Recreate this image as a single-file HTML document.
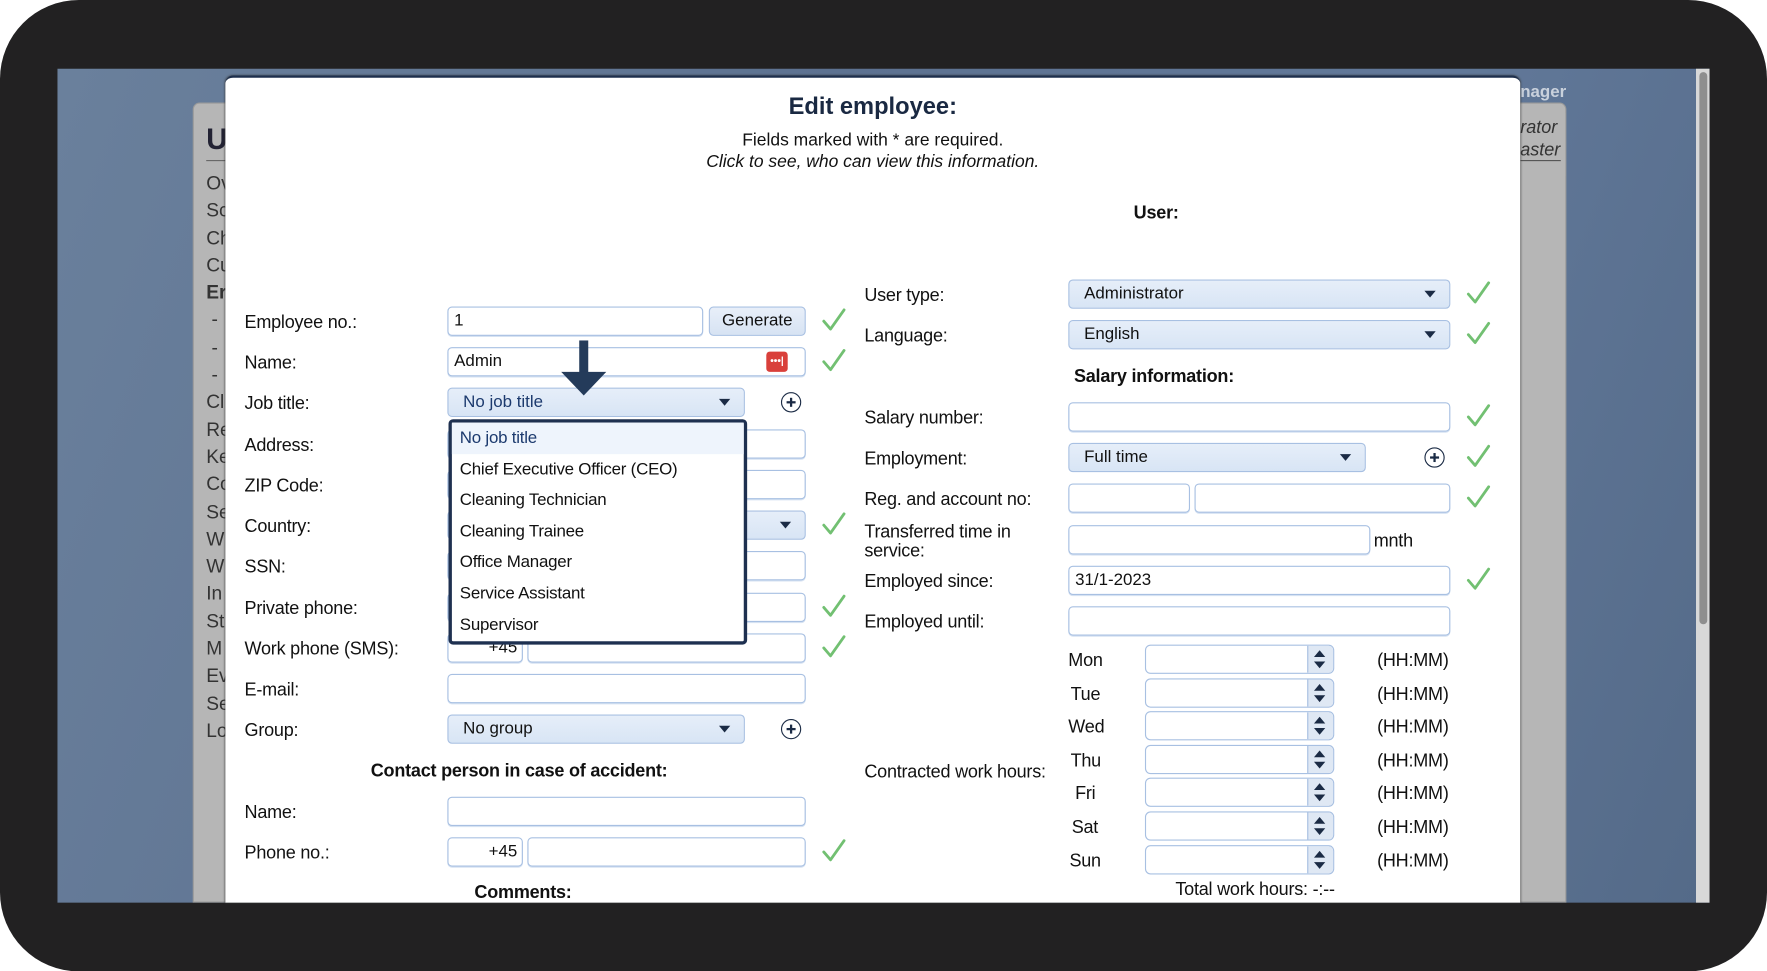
<!DOCTYPE html>
<html><head><meta charset="utf-8"><style>
html,body{margin:0;padding:0;background:#fff;overflow:hidden;width:1767px;height:971px}
#w{position:absolute;left:0;top:0;width:1568px;height:862px;transform:scale(1.12691);transform-origin:0 0;font-family:"Liberation Sans",Arial,sans-serif;color:#111}
.a{position:absolute}
.frame{left:0;top:0;width:1568px;height:862px;background:#222122;border-radius:70px}
.screen{left:51px;top:61px;width:1466px;height:740px;background:linear-gradient(110deg,#6a809c 0%,#5d7291 40%,#62799a 70%,#546a88 100%);overflow:hidden}
.l{position:absolute;font-size:16px;line-height:18px;transform:translateY(-7px);white-space:nowrap;letter-spacing:-0.2px}
.in{position:absolute;height:26px;border:1px solid #a8c0e2;border-radius:4px;background:#fff;box-shadow:0 1px 0 #d6e2f2;transform:translateY(-13px);box-sizing:border-box;font-size:15px;line-height:23px;padding-left:5px}
.sel{position:absolute;height:26px;border:1px solid #a8c0e2;border-radius:4px;background:linear-gradient(#e6eef9,#d8e5f5);transform:translateY(-13px);box-sizing:border-box;font-size:15px;line-height:23px;padding-left:13px}
.sel:after{content:"";position:absolute;right:12px;top:9px;border-left:5px solid transparent;border-right:5px solid transparent;border-top:6px solid #1b2b45}
.ck{position:absolute;transform:translateY(-12px)}
.pl{position:absolute;width:18px;height:18px;border:1.5px solid #1b2b45;border-radius:50%;transform:translateY(-9px);box-sizing:border-box}
.pl:before{content:"";position:absolute;left:3.5px;top:6.5px;width:8px;height:2px;background:#1b2b45}
.pl:after{content:"";position:absolute;left:6.5px;top:3.5px;width:2px;height:8px;background:#1b2b45}
.sp{position:absolute;height:26px;width:168px;border:1px solid #a8c0e2;border-radius:5px;background:#fff;transform:translateY(-13px);box-sizing:border-box;overflow:hidden}
.sp i{position:absolute;right:0;top:0;width:22px;height:100%;background:#dfe8f4;border-left:1px solid #a8c0e2}
.sp i:before{content:"";position:absolute;left:5px;top:4px;border-left:5px solid transparent;border-right:5px solid transparent;border-bottom:6px solid #1b2b45}
.sp i:after{content:"";position:absolute;left:5px;top:14px;border-left:5px solid transparent;border-right:5px solid transparent;border-top:6px solid #1b2b45}
.dd div{height:27.6px;line-height:27px;padding-left:7px;font-size:15px;letter-spacing:-0.2px}
</style></head><body><div id="w">
<div class="a frame"></div>
<div class="a screen"></div>
<div class="a" style="left:1505px;top:61px;width:12px;height:740px;background:#d8d8d8"></div>
<div class="a" style="left:1508px;top:64px;width:7px;height:490px;background:#8e8e8e;border-radius:4px"></div>
<div class="a" style="left:171px;top:91px;width:1219px;height:710px;background:#b6b6b6;border-radius:6px 6px 0 0;border:1px solid #9a9a9a;box-sizing:border-box"></div>
<div class="a" style="left:183px;top:108px;font-size:26px;font-weight:bold;color:#223">U</div>
<div class="a" style="left:183px;top:142px;width:20px;height:1px;background:#666"></div>
<div class="a" style="left:183px;top:151px;font-size:17px;line-height:24.3px;color:#333">Ov<br>Sc<br>Ch<br>Cu<br><b>Er</b><br>&nbsp;-<br>&nbsp;-<br>&nbsp;-<br>Cl<br>Re<br>Ke<br>Co<br>Se<br>W<br>W<br>In<br>St<br>M<br>Ev<br>Se<br>Lo</div>
<div class="a" style="left:1349px;top:73px;font-size:15px;font-weight:bold;color:#c9d1dc">nager</div>
<div class="a" style="left:1349px;top:96px;width:40px;height:60px;background:#b6b6b6;border-radius:0 5px 0 0"></div>
<div class="a" style="left:1349px;top:104px;font-size:16px;font-style:italic;color:#333;line-height:20px">rator<br><span style="border-bottom:1px solid #555">aster</span></div>
<div class="a" style="left:200px;top:67px;width:1149px;height:734px;background:#fff;border-top:2px solid #1d2f4d;border-radius:7px 7px 0 0;box-sizing:border-box;box-shadow:0 0 2px #333"></div>
<div class="a" style="left:200px;top:83px;width:1149px;text-align:center;font-size:21px;font-weight:bold;color:#1a2942">Edit employee:</div>
<div class="a" style="left:200px;top:115px;width:1149px;text-align:center;font-size:15.5px;line-height:19px">Fields marked with * are required.<br><i>Click to see, who can view this information.</i></div>
<div class="l" style="left:1006px;top:188px;font-weight:bold">User:</div>

<div class="l" style="left:217px;top:285px">Employee no.:</div>
<div class="in" style="left:397px;top:285px;width:227px">1</div>
<div class="a" style="left:629px;top:272px;width:86px;height:26px;border:1px solid #a8c0e2;border-radius:4px;background:linear-gradient(#e8eff9,#d7e3f3);box-sizing:border-box;text-align:center;font-size:15px;line-height:24px">Generate</div>
<div class="l" style="left:217px;top:321px">Name:</div>
<div class="in" style="left:397px;top:321px;width:318px">Admin</div>
<div class="a" style="left:680px;top:312px;width:19px;height:18px;background:#d9403b;border-radius:3px;color:#fff;font-size:9px;line-height:17px;text-align:center;font-weight:bold">•••|</div>
<div class="l" style="left:217px;top:357px">Job title:</div>
<div class="sel" style="left:397px;top:357px;width:264px;color:#1c3a6e">No job title</div>
<div class="pl" style="left:693px;top:357px"></div>
<div class="l" style="left:217px;top:394px">Address:</div>
<div class="in" style="left:397px;top:394px;width:318px"></div>
<div class="l" style="left:217px;top:430px">ZIP Code:</div>
<div class="in" style="left:397px;top:430px;width:318px"></div>
<div class="l" style="left:217px;top:466px">Country:</div>
<div class="sel" style="left:397px;top:466px;width:318px"></div>
<div class="l" style="left:217px;top:502px">SSN:</div>
<div class="in" style="left:397px;top:502px;width:318px"></div>
<div class="l" style="left:217px;top:539px">Private phone:</div>
<div class="in" style="left:397px;top:539px;width:318px"></div>
<div class="l" style="left:217px;top:575px">Work phone (SMS):</div>
<div class="in" style="left:397px;top:575px;width:67px;text-align:right;padding-right:4px">+45</div>
<div class="in" style="left:468px;top:575px;width:247px"></div>
<div class="l" style="left:217px;top:611px">E-mail:</div>
<div class="in" style="left:397px;top:611px;width:318px"></div>
<div class="l" style="left:217px;top:647px">Group:</div>
<div class="sel" style="left:397px;top:647px;width:264px">No group</div>
<div class="pl" style="left:693px;top:647px"></div>
<div class="l" style="left:329px;top:683px;font-weight:bold">Contact person in case of accident:</div>
<div class="l" style="left:217px;top:720px">Name:</div>
<div class="in" style="left:397px;top:720px;width:318px"></div>
<div class="l" style="left:217px;top:756px">Phone no.:</div>
<div class="in" style="left:397px;top:756px;width:67px;text-align:right;padding-right:4px">+45</div>
<div class="in" style="left:468px;top:756px;width:247px"></div>
<div class="l" style="left:421px;top:791px;font-weight:bold">Comments:</div>

<div class="a dd" style="left:398px;top:372px;width:265px;height:200px;border:3px solid #1e3050;border-radius:4px;background:#fff;box-sizing:border-box">
<div style="background:#eef4fc;color:#1c3a6e">No job title</div>
<div>Chief Executive Officer (CEO)</div>
<div>Cleaning Technician</div>
<div>Cleaning Trainee</div>
<div>Office Manager</div>
<div>Service Assistant</div>
<div>Supervisor</div>
</div>
<svg class="a" style="left:496px;top:302px" width="44" height="50"><rect x="18" y="0" width="8" height="30" fill="#243b5a"/><path d="M2 28 L42 28 L22 49 Z" fill="#243b5a"/></svg>

<div class="l" style="left:767px;top:261px">User type:</div>
<div class="sel" style="left:948px;top:261px;width:339px">Administrator</div>
<div class="l" style="left:767px;top:297px">Language:</div>
<div class="sel" style="left:948px;top:297px;width:339px">English</div>
<div class="l" style="left:953px;top:333px;font-weight:bold">Salary information:</div>
<div class="l" style="left:767px;top:370px">Salary number:</div>
<div class="in" style="left:948px;top:370px;width:339px"></div>
<div class="l" style="left:767px;top:406px">Employment:</div>
<div class="sel" style="left:948px;top:406px;width:264px">Full time</div>
<div class="pl" style="left:1264px;top:406px"></div>
<div class="l" style="left:767px;top:442px">Reg. and account no:</div>
<div class="in" style="left:948px;top:442px;width:108px"></div>
<div class="in" style="left:1060px;top:442px;width:227px"></div>
<div class="l" style="left:767px;top:479px;line-height:17px;transform:translateY(-15px)">Transferred time in<br>service:</div>
<div class="in" style="left:948px;top:479px;width:268px"></div>
<div class="l" style="left:1219px;top:479px">mnth</div>
<div class="l" style="left:767px;top:515px">Employed since:</div>
<div class="in" style="left:948px;top:515px;width:339px">31/1-2023</div>
<div class="l" style="left:767px;top:551px">Employed until:</div>
<div class="in" style="left:948px;top:551px;width:339px"></div>
<div class="l" style="left:767px;top:684px">Contracted work hours:</div>

<div class="l" style="left:948px;top:585px">Mon</div><div class="sp" style="left:1016px;top:585px"><i></i></div><div class="l" style="left:1222px;top:585px">(HH:MM)</div>
<div class="l" style="left:950px;top:615px">Tue</div><div class="sp" style="left:1016px;top:615px"><i></i></div><div class="l" style="left:1222px;top:615px">(HH:MM)</div>
<div class="l" style="left:948px;top:644px">Wed</div><div class="sp" style="left:1016px;top:644px"><i></i></div><div class="l" style="left:1222px;top:644px">(HH:MM)</div>
<div class="l" style="left:950px;top:674px">Thu</div><div class="sp" style="left:1016px;top:674px"><i></i></div><div class="l" style="left:1222px;top:674px">(HH:MM)</div>
<div class="l" style="left:954px;top:703px">Fri</div><div class="sp" style="left:1016px;top:703px"><i></i></div><div class="l" style="left:1222px;top:703px">(HH:MM)</div>
<div class="l" style="left:951px;top:733px">Sat</div><div class="sp" style="left:1016px;top:733px"><i></i></div><div class="l" style="left:1222px;top:733px">(HH:MM)</div>
<div class="l" style="left:949px;top:763px">Sun</div><div class="sp" style="left:1016px;top:763px"><i></i></div><div class="l" style="left:1222px;top:763px">(HH:MM)</div>
<div class="l" style="left:1043px;top:788px">Total work hours: -:--</div>

<svg width="0" height="0" style="position:absolute"><defs><symbol id="c" viewBox="0 0 22 22"><path d="M2 12 L8 19 L20 2" fill="none" stroke="#72c072" stroke-width="2.5" stroke-linecap="round" stroke-linejoin="round"/></symbol></defs></svg>
<svg class="ck" style="left:729px;top:285px" width="22" height="22"><use href="#c"/></svg>
<svg class="ck" style="left:729px;top:321px" width="22" height="22"><use href="#c"/></svg>
<svg class="ck" style="left:729px;top:466px" width="22" height="22"><use href="#c"/></svg>
<svg class="ck" style="left:729px;top:539px" width="22" height="22"><use href="#c"/></svg>
<svg class="ck" style="left:729px;top:575px" width="22" height="22"><use href="#c"/></svg>
<svg class="ck" style="left:729px;top:756px" width="22" height="22"><use href="#c"/></svg>
<svg class="ck" style="left:1301px;top:261px" width="22" height="22"><use href="#c"/></svg>
<svg class="ck" style="left:1301px;top:297px" width="22" height="22"><use href="#c"/></svg>
<svg class="ck" style="left:1301px;top:370px" width="22" height="22"><use href="#c"/></svg>
<svg class="ck" style="left:1301px;top:406px" width="22" height="22"><use href="#c"/></svg>
<svg class="ck" style="left:1301px;top:442px" width="22" height="22"><use href="#c"/></svg>
<svg class="ck" style="left:1301px;top:515px" width="22" height="22"><use href="#c"/></svg>
</div></body></html>
